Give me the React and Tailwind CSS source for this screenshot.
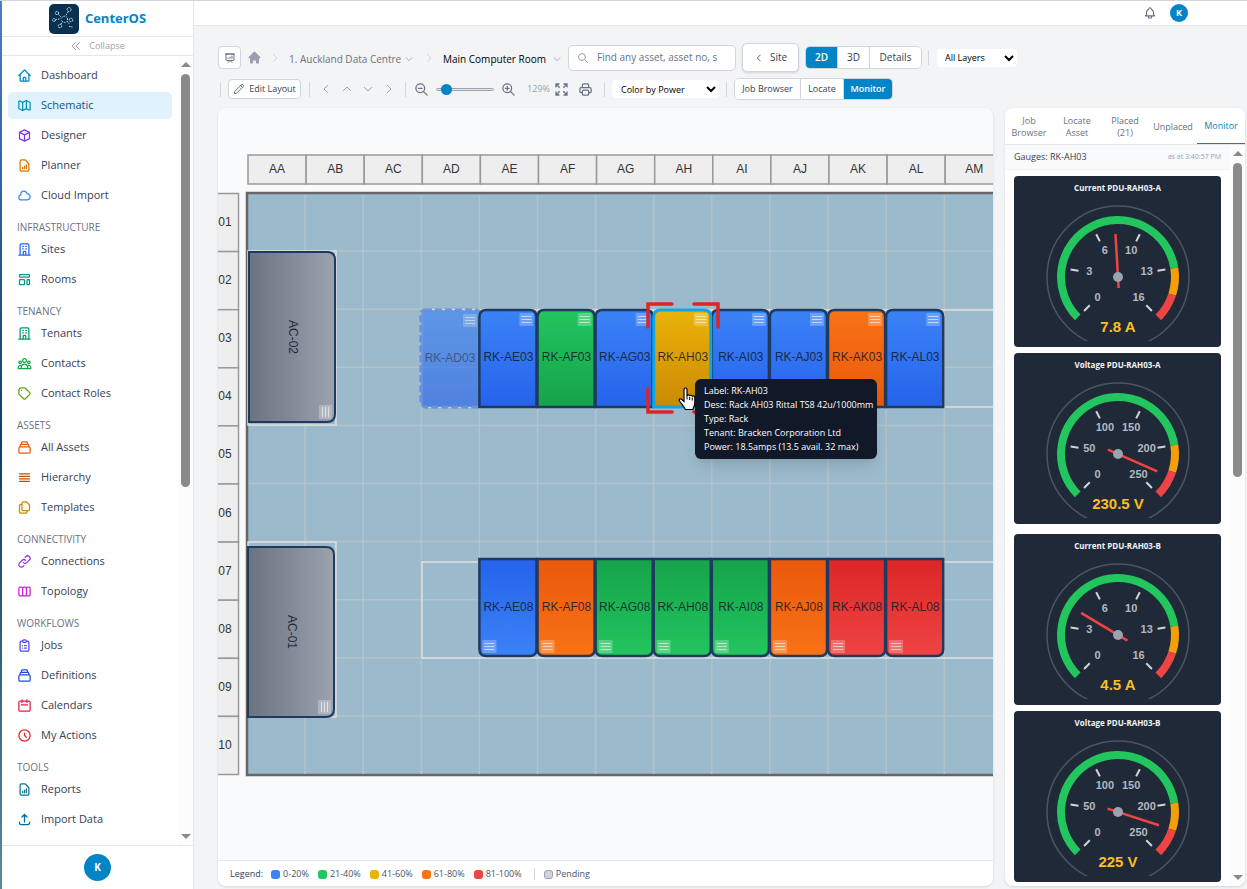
import { useState } from "react"
import {
  HiHome,
  HiOutlineBell,
  HiOutlineCalendar,
  HiOutlineChevronDoubleLeft,
  HiOutlineChevronDown,
  HiOutlineChevronLeft,
  HiOutlineChevronRight,
  HiOutlineChevronUp,
  HiOutlineClipboardList,
  HiOutlineClock,
  HiOutlineCloud,
  HiOutlineCollection,
  HiOutlineCube,
  HiOutlineDocumentDuplicate,
  HiOutlineDocumentReport,
  HiOutlineHome,
  HiOutlineLink,
  HiOutlineMap,
  HiOutlineOfficeBuilding,
  HiOutlinePencil,
  HiOutlinePresentationChartBar,
  HiOutlinePrinter,
  HiOutlineSearch,
  HiOutlineTag,
  HiOutlineTemplate,
  HiOutlineUpload,
  HiOutlineUserGroup,
  HiOutlineViewBoards,
  HiOutlineViewList,
  HiOutlineZoomIn,
  HiOutlineZoomOut,
} from "react-icons/hi"

const navSections = [
  {
    items: [
      { label: "Dashboard", icon: HiOutlineHome, color: "text-[#0284c7]" },
      { label: "Schematic", icon: HiOutlineMap, color: "text-[#0891b2]" },
      { label: "Designer", icon: HiOutlineCube, color: "text-[#7c3aed]" },
      { label: "Planner", icon: HiOutlineDocumentReport, color: "text-[#d97706]" },
      { label: "Cloud Import", icon: HiOutlineCloud, color: "text-[#3b82f6]" },
    ],
  },
  {
    title: "Infrastructure",
    items: [
      { label: "Sites", icon: HiOutlineOfficeBuilding, color: "text-[#2563eb]" },
      { label: "Rooms", icon: HiOutlineTemplate, color: "text-[#0d9488]" },
    ],
  },
  {
    title: "Tenancy",
    items: [
      { label: "Tenants", icon: HiOutlineOfficeBuilding, color: "text-[#059669]" },
      { label: "Contacts", icon: HiOutlineUserGroup, color: "text-[#16a34a]" },
      { label: "Contact Roles", icon: HiOutlineTag, color: "text-[#65a30d]" },
    ],
  },
  {
    title: "Assets",
    items: [
      { label: "All Assets", icon: HiOutlineCollection, color: "text-[#ea580c]" },
      { label: "Hierarchy", icon: HiOutlineViewList, color: "text-[#b45309]" },
      { label: "Templates", icon: HiOutlineDocumentDuplicate, color: "text-[#ca8a04]" },
    ],
  },
  {
    title: "Connectivity",
    items: [
      { label: "Connections", icon: HiOutlineLink, color: "text-[#9333ea]" },
      { label: "Topology", icon: HiOutlineViewBoards, color: "text-[#c026d3]" },
    ],
  },
  {
    title: "Workflows",
    items: [
      { label: "Jobs", icon: HiOutlineClipboardList, color: "text-[#4f46e5]" },
      { label: "Definitions", icon: HiOutlineCollection, color: "text-[#1d4ed8]" },
      { label: "Calendars", icon: HiOutlineCalendar, color: "text-[#e11d48]" },
      { label: "My Actions", icon: HiOutlineClock, color: "text-[#dc2626]" },
    ],
  },
  {
    title: "Tools",
    items: [
      { label: "Reports", icon: HiOutlineDocumentReport, color: "text-[#0e7490]" },
      { label: "Import Data", icon: HiOutlineUpload, color: "text-[#0369a1]" },
    ],
  },
]

const Scrollbar = ({ thumb }) => (
  <div className="flex w-[15px] shrink-0 flex-col items-center bg-[#fcfcfc] py-[6px]">
    <div className="border-x-[5px] border-b-[5px] border-x-transparent border-b-[#8a8a8a]" />
    <div className={`mt-[7px] w-[9px] rounded-full bg-[#8a8a8a] ${thumb}`} />
    <div className="mt-auto border-x-[5px] border-t-[5px] border-x-transparent border-t-[#8a8a8a]" />
  </div>
)

const Logo = () => (
  <svg width="30" height="30" viewBox="0 0 30 30" fill="none" stroke="#a9d8ee" strokeWidth="1">
    <rect width="30" height="30" rx="5" fill="#0b2f4e" stroke="none" />
    <path d="M12 14.500q3-4 6-1M18.500 14v4M12.500 16.500q1.500 2.500 4 2" strokeDasharray="2 1" />
    <circle cx="20" cy="5.500" r="2" strokeDasharray="2 .6" />
    <circle cx="8" cy="9" r="1.700" strokeDasharray="2 .6" />
    <circle cx="5" cy="16" r="1.500" strokeDasharray="2 .6" />
    <circle cx="11" cy="22" r="1.800" strokeDasharray="2 .6" />
    <circle cx="22" cy="16" r="1.800" strokeDasharray="2 .6" />
    <path d="M19 8l-2.500 4M9.500 10.500l2.500 2.500M6.500 15.500l4-.5M12 20l1.500-2.500M18 17.500l2.500 2.500M20 22.500h3v2" strokeDasharray="1.500 1" />
  </svg>
)

const Sidebar = () => (
  <aside className="flex w-48 shrink-0 flex-col border-r border-gray-200 bg-white">
    <div className="flex h-9 shrink-0 items-center justify-center gap-[6px] border-b border-gray-200">
      <Logo />
      <span className="text-[13px] font-bold text-[#0284c7]">CenterOS</span>
    </div>
    <button className="flex h-[19px] shrink-0 items-center justify-center gap-[7px] border-b border-gray-200 text-[9px] text-gray-400">
      <HiOutlineChevronDoubleLeft className="size-3" />
      Collapse
    </button>
    <div className="flex min-h-0 flex-1">
      <nav className="flex-1 overflow-hidden pt-[6px] pr-[6px] pl-[6px]">
        {navSections.map((section, i) => (
          <div key={i}>
            {section.title && (
              <h2 className="pt-[7px] pb-px pl-[9px] text-[10px] leading-4 text-gray-500 uppercase">
                {section.title}
              </h2>
            )}
            {section.items.map(({ label, icon: Icon, color }) => (
              <a
                key={label}
                href="#"
                className={`mb-[3px] flex h-[27px] items-center gap-[9px] rounded-[5px] pl-[9px] text-[11px] ${
                  label === "Schematic" ? "bg-[#e0f2fe] text-[#075985]" : "text-gray-700"
                }`}
              >
                <Icon className={`size-[15px] ${color}`} />
                {label}
              </a>
            ))}
          </div>
        ))}
      </nav>
      <Scrollbar thumb="h-[413px]" />
    </div>
    <div className="flex h-11 shrink-0 items-center justify-center border-t border-gray-200">
      <button className="size-[27px] rounded-full bg-[#0284c7] text-[10px] font-bold text-white">K</button>
    </div>
  </aside>
)

const Divider = () => <div className="h-[15px] w-px shrink-0 bg-gray-300" />

const ExpandIcon = () => (
  <svg className="size-[13px]" viewBox="0 0 13 13" fill="none" stroke="currentColor" strokeWidth="1.300">
    <path d="M1 4.500V1h3.500M1 1l3.700 3.700M8.500 1H12v3.500M12 1L8.300 4.700M1 8.500V12h3.500M1 12l3.700-3.700M12 8.500V12H8.500M12 12L8.300 8.300" />
  </svg>
)

const Toolbar = () => {
  const [zoom, setZoom] = useState(129)
  const [view, setView] = useState("2D")
  const segment = (active) => (active ? "bg-[#0284c7] font-semibold text-white" : "bg-white text-gray-700")

  return (
    <div className="flex flex-col text-gray-700">
      <div className="flex h-[29px] items-center">
        <button aria-label="Dashboards" className="flex size-[23px] items-center justify-center rounded-[4px] border border-gray-300 bg-white text-gray-500">
          <HiOutlinePresentationChartBar className="size-3" />
        </button>
        <a href="#" aria-label="Home" className="ml-[6px] text-gray-400">
          <HiHome className="size-[15px]" />
        </a>
        <HiOutlineChevronRight className="ml-[7px] size-3 text-gray-300" />
        <a href="#" className="ml-2 flex w-[125px] items-center justify-between pt-[3px] text-[10px] whitespace-nowrap text-gray-500">
          1. Auckland Data Centre
          <HiOutlineChevronDown className="size-[10px] shrink-0 text-gray-400" />
        </a>
        <HiOutlineChevronRight className="ml-[9px] size-3 text-gray-300" />
        <a href="#" className="ml-2 flex w-[119px] items-center justify-between pt-[3px] text-[10px] font-medium whitespace-nowrap text-black">
          Main Computer Room
          <HiOutlineChevronDown className="size-[10px] shrink-0 text-gray-400" />
        </a>
        <label className="ml-[6px] flex h-[26px] w-42 items-center gap-2 rounded-[5px] border border-gray-300 bg-white px-2">
          <HiOutlineSearch className="size-3 shrink-0 text-gray-400" />
          <input
            type="text"
            aria-label="Find asset"
            placeholder="Find any asset, asset no, s"
            className="w-full min-w-0 text-[10px] outline-none placeholder:text-gray-500"
          />
        </label>
        <button className="ml-[6px] flex h-[29px] w-[57px] items-center justify-center gap-[6px] rounded-[5px] border border-gray-300 bg-white text-[10px] shadow-sm">
          <HiOutlineChevronLeft className="size-[10px]" />
          Site
        </button>
        <div className="ml-[6px] flex h-[23px] divide-x divide-gray-300 overflow-hidden rounded-[5px] border border-gray-300 text-[10px]">
          {["2D", "3D", "Details"].map((name) => (
            <button
              key={name}
              onClick={() => setView(name)}
              className={`${name === "Details" ? "w-[51px]" : "w-8"} ${segment(view === name)}`}
            >
              {name}
            </button>
          ))}
        </div>
        <div className="mx-2 ml-[6px]">
          <Divider />
        </div>
        <select aria-label="Layers" className="h-[18px] w-20 rounded-[4px] bg-white pl-1 text-[9px] text-black">
          <option>All Layers</option>
        </select>
      </div>

      <div className="mt-[6px] flex h-[22px] items-center">
        <div className="ml-[2px]">
          <Divider />
        </div>
        <button className="ml-[7px] flex h-5 w-[73px] items-center justify-center gap-1 rounded-[4px] border border-gray-300 bg-white text-[9px] whitespace-nowrap">
          <HiOutlinePencil className="size-3 text-gray-500" />
          Edit Layout
        </button>
        <div className="mr-[10px] ml-2">
          <Divider />
        </div>
        <div className="flex gap-[9px] text-gray-400">
          <button aria-label="Pan left"><HiOutlineChevronLeft className="size-3" /></button>
          <button aria-label="Pan up"><HiOutlineChevronUp className="size-3" /></button>
          <button aria-label="Pan down"><HiOutlineChevronDown className="size-3" /></button>
          <button aria-label="Pan right"><HiOutlineChevronRight className="size-3" /></button>
        </div>
        <div className="mr-2 ml-[10px]">
          <Divider />
        </div>
        <button aria-label="Zoom out" className="text-gray-500"><HiOutlineZoomOut className="size-[15px]" /></button>
        <input
          type="range"
          aria-label="Zoom"
          min="100"
          max="400"
          value={zoom}
          onChange={(e) => setZoom(Number(e.target.value))}
          className="mx-[7px] h-[3px] w-[58px] appearance-none rounded-full border border-gray-400 bg-gray-200 [&::-webkit-slider-thumb]:size-[11px] [&::-webkit-slider-thumb]:appearance-none [&::-webkit-slider-thumb]:rounded-full [&::-webkit-slider-thumb]:bg-[#0284c7]"
        />
        <button aria-label="Zoom in" className="text-gray-500"><HiOutlineZoomIn className="size-[15px]" /></button>
        <span className="ml-[11px] w-[22px] text-[9px] text-gray-400">{zoom}%</span>
        <button aria-label="Fit to screen" className="ml-[6px] text-gray-500"><ExpandIcon /></button>
        <button aria-label="Print" className="ml-[10px] text-gray-500"><HiOutlinePrinter className="size-[15px]" /></button>
        <div className="mr-[7px] ml-[11px]">
          <Divider />
        </div>
        <select aria-label="Color by" className="h-[18px] w-[107px] rounded-[4px] bg-white pl-[5px] text-[9px] text-black">
          <option>Color by Power</option>
        </select>
        <div className="mx-[7px]">
          <Divider />
        </div>
        <div className="flex h-[22px] divide-x divide-gray-300 overflow-hidden rounded-[5px] border border-gray-300 text-[9px]">
          <button className="w-[66px] bg-white">Job Browser</button>
          <button className="w-[43px] bg-white">Locate</button>
          <button className="w-[48px] bg-[#0284c7] font-semibold text-white">Monitor</button>
        </div>
      </div>
    </div>
  )
}

const CELL = 58.1
const COLUMNS = ["AA", "AB", "AC", "AD", "AE", "AF", "AG", "AH", "AI", "AJ", "AK", "AL", "AM"]
const ROWS = ["01", "02", "03", "04", "05", "06", "07", "08", "09", "10"]

const levels = {
  blue: ["#3b82f6", "#2563eb"],
  green: ["#22c55e", "#16a34a"],
  yellow: ["#eab308", "#ca8a04"],
  orange: ["#f97316", "#ea580c"],
  red: ["#ef4444", "#dc2626"],
}

const frontRow = ["blue", "green", "blue", "yellow", "blue", "blue", "orange", "blue"]
const backRow = ["blue", "orange", "green", "green", "green", "orange", "red", "red"]

const Badge = ({ x, y, vertical }) => (
  <g transform={vertical ? `translate(${x + 14} ${y}) rotate(90)` : `translate(${x} ${y})`}>
    <rect width="14" height="13" rx="1" fill="#fff" opacity="0.250" />
    <path d="M2 3.500h10M2 6.500h10M2 9.500h10" stroke="#fff" strokeWidth="1" opacity="0.600" />
  </g>
)

// racks facing down have their rounded front at the bottom
const Rack = ({ col, y, level, down, selected }) => {
  const x = col * CELL - 1
  const label = `RK-${COLUMNS[col]}${down ? "08" : "03"}`
  const shape = down
    ? `M${x + 1} ${y}h${CELL - 1}v90q0 7-7 7h${15 - CELL}q-7 0-7-7z`
    : `M${x + 1} ${y + 97}v-90q0-7 7-7h${CELL - 15}q7 0 7 7v90z`
  return (
    <g>
      <path d={shape} fill={`url(#${level}-${down ? "down" : "up"})`} stroke={selected ? "#0ea5e9" : "#1e3a5f"} strokeWidth={selected ? 3 : 2.5} />
      <Badge x={down ? x + 4 : x + CELL - 17} y={down ? y + 81 : y + 3} />
      <text x={x + 1 + CELL / 2} y={y + (down ? 52 : 51)} textAnchor="middle" fill="#111827" fillOpacity="0.850">{label}</text>
    </g>
  )
}

const FloorPlan = () => (
  <svg className="block h-full w-full font-['Liberation_Sans',Arial,sans-serif] text-[12px]">
    <defs>
      {Object.entries(levels).map(([name, [light, dark]]) => (
        <g key={name}>
          <linearGradient id={`${name}-up`} x1="0" y1="0" x2="0" y2="1">
            <stop offset="0" stopColor={light} />
            <stop offset="1" stopColor={dark} />
          </linearGradient>
          <linearGradient id={`${name}-down`} x1="0" y1="0" x2="0" y2="1">
            <stop offset="0" stopColor={dark} />
            <stop offset="1" stopColor={light} />
          </linearGradient>
        </g>
      ))}
      <linearGradient id="cooling">
        <stop offset="0" stopColor="#6b7280" />
        <stop offset="1" stopColor="#9ca3af" />
      </linearGradient>
    </defs>

    <g transform="translate(29 85)">
      {/* rulers */}
      <g fill="#eee" stroke="#999" strokeWidth="1.500">
        {COLUMNS.map((name, i) => (
          <rect key={name} x={1 + i * CELL} y="-38" width={CELL} height="29" />
        ))}
        {ROWS.map((name, i) => (
          <rect key={name} x="-60" y={0.5 + i * CELL} width="51.500" height={CELL} />
        ))}
      </g>
      <g fill="#333" textAnchor="middle">
        {COLUMNS.map((name, i) => (
          <text key={name} x={1 + (i + 0.5) * CELL} y="-20">{name}</text>
        ))}
        {ROWS.map((name, i) => (
          <text key={name} x="-22" y={(i + 0.5) * CELL + 4}>{name}</text>
        ))}
      </g>

      {/* room */}
      <rect x="0" y="0" width="1200" height={CELL * 10 + 1} fill="#9bbacb" stroke="#666" strokeWidth="2.500" />
      <g stroke="#b4c2c9" strokeWidth="1.500">
        {COLUMNS.map((name, i) => (
          <path key={name} d={`M${(i + 1) * CELL} 2V${CELL * 10}`} />
        ))}
        {ROWS.slice(1).map((name, i) => (
          <path key={name} d={`M2 ${(i + 1) * CELL}H1200`} />
        ))}
      </g>
      <g fill="none" stroke="#dde0e0" strokeWidth="1.500">
        <rect x="1" y="58" width="88" height="174" />
        <rect x="1" y="349" width="88" height="175" />
        <rect x="175" y="117" width="1100" height="97" />
        <rect x="175" y="369" width="1100" height="96" />
      </g>

      {/* cooling units */}
      {[["AC-02", 1, 59], ["AC-01", 0, 354]].map(([name, x, y]) => (
        <g key={name}>
          <path d={`M${x + 1} ${y}h78q8 0 8 8v154q0 8-8 8h-78z`} fill="url(#cooling)" stroke="#1e3a5f" strokeWidth="2" />
          <text transform={`translate(${x + 41} ${y + 85}) rotate(90)`} textAnchor="middle" fill="#1f2937">{name}</text>
          <Badge x={x + 70} y={y + 153} vertical />
        </g>
      ))}

      <g opacity="0.750">
        <rect x="174" y="117" width="59" height="97" rx="4" fill="url(#blue-up)" fillOpacity="0.850" stroke="#4f7be8" strokeWidth="3" strokeDasharray="7 3" />
        <Badge x={216} y={121} />
        <text x="203" y="169" textAnchor="middle" fill="#1f3a6b">RK-AD03</text>
      </g>
      {frontRow.map((level, i) => (
        i !== 3 && <Rack key={i} col={i + 4} y={117} level={level} />
      ))}
      <Rack col={7} y={117} level="yellow" selected />
      {backRow.map((level, i) => (
        <Rack key={i} col={i + 4} y={366} level={level} down />
      ))}

      <path
        d="M401 134V111H425M447 111H471V134M401 196V219H425M447 219H471V196"
        fill="none"
        stroke="#dc2626"
        strokeWidth="3.500"
        strokeLinecap="round"
      />
    </g>
  </svg>
)

const HandCursor = () => (
  <svg className="pointer-events-none absolute top-[279px] left-[460px]" width="18" height="24" viewBox="0 0 18 24">
    <path
      d="M6 2.500C6 .500 9 .500 9 2.500V9c0-1.500 2.700-1.500 2.700.3 0-1.500 2.600-1.400 2.600.5 0-1.300 2.500-1.200 2.500.7V16c0 3-1.500 4-1.800 6.500H7.300C6.500 19.500 3.500 17 1.500 14c-1-1.700.8-3 2.300-1.500L6 14.500z"
      fill="#fff"
      stroke="#000"
      strokeWidth="1.200"
    />
    <path d="M9 9v3.500M11.700 10v3M14.300 10.500v3" stroke="#000" strokeWidth="1" />
  </svg>
)

const legend = [
  { label: "0-20%", color: "bg-[#3b82f6]" },
  { label: "21-40%", color: "bg-[#22c55e]" },
  { label: "41-60%", color: "bg-[#eab308]" },
  { label: "61-80%", color: "bg-[#f97316]" },
  { label: "81-100%", color: "bg-[#ef4444]" },
]

const Schematic = () => (
  <section className="flex min-w-0 flex-1 flex-col overflow-hidden rounded-lg bg-gray-50 shadow-sm">
    <div className="relative min-h-0 flex-1 overflow-hidden">
      <FloorPlan />
      <HandCursor />
      <div role="tooltip" className="absolute top-[271px] left-[477px] rounded-md bg-[#111827] py-[5px] pr-1 pl-[9px] text-[9px] leading-[14px] whitespace-nowrap text-white shadow-lg">
        <p>Label: RK-AH03</p>
        <p>Desc: Rack AH03 Rittal TS8 42u/1000mm</p>
        <p>Type: Rack</p>
        <p>Tenant: Bracken Corporation Ltd</p>
        <p>Power: 18.5amps (13.5 avail. 32 max)</p>
      </div>
    </div>
    <footer className="flex h-[26px] shrink-0 items-center border-t border-gray-200 bg-white pt-px pl-3 text-[9px] text-gray-600">
      <span className="mr-2 text-gray-700">Legend:</span>
      <ul className="flex gap-[9px]">
        {legend.map(({ label, color }) => (
          <li key={label} className="flex items-center gap-[3px]">
            <span className={`size-[9px] rounded-[3px] ${color}`} />
            {label}
          </li>
        ))}
      </ul>
      <div className="mr-[9px] ml-3 h-3 w-px bg-gray-300" />
      <span className="mr-[3px] size-[9px] rounded-[3px] border border-gray-400 bg-gray-300" />
      Pending
    </footer>
  </section>
)

const polar = (deg, r) => {
  const rad = (deg * Math.PI) / 180
  return [72 + r * Math.sin(rad), 80 - r * Math.cos(rad)]
}

const arc = (from, to, r) => {
  const [x1, y1] = polar(from, r)
  const [x2, y2] = polar(to, r)
  return `M${x1} ${y1}A${r} ${r} 0 ${to - from > 180 ? 1 : 0} 1 ${x2} ${y2}`
}

const Gauge = ({ title, value, max, unit }) => {
  const angle = -135 + (value / max) * 270
  const [tipX, tipY] = polar(angle, 43)
  const [tailX, tailY] = polar(angle, -11)

  return (
    <figure className="rounded-[4px] bg-[#1f2937] pt-1.5 pb-1.5">
      <figcaption className="text-center text-[8px] leading-3 font-bold text-gray-100">{title}</figcaption>
      <svg className="mx-auto mt-[3px] block font-['Liberation_Sans',Arial,sans-serif]" width="144" height="144" viewBox="0 0 144 144" fill="none">
        <circle cx="72" cy="80" r="71" stroke="#4b5563" strokeWidth="1.500" />
        <path d={arc(-135, 81, 57)} stroke="#22c55e" strokeWidth="8" />
        <path d={arc(81, 108, 57)} stroke="#f59e0b" strokeWidth="8" />
        <path d={arc(108, 135, 57)} stroke="#ef4444" strokeWidth="8" />
        {[0, 1, 2, 3, 4, 5].map((i) => {
          const deg = -135 + i * 54
          const [x1, y1] = polar(deg, 40)
          const [x2, y2] = polar(deg, 48)
          const [tx, ty] = polar(deg, 29)
          return (
            <g key={i}>
              <path d={`M${x1} ${y1}L${x2} ${y2}`} stroke="#d1d5db" strokeWidth="2" />
              <text x={tx} y={ty + 3} textAnchor="middle" fill="#b4b9c1" fontSize="11" fontWeight="700">
                {Math.round((max * i) / 5)}
              </text>
            </g>
          )
        })}
        <path d={`M${tailX} ${tailY}L${tipX} ${tipY}`} stroke="#ef4444" strokeWidth="2.500" />
        <circle cx="72" cy="80" r="5" fill="#9ca3af" />
        <text x="72" y="135" textAnchor="middle" fill="#fbbf24" fontSize="15" fontWeight="700">
          {value} {unit}
        </text>
      </svg>
    </figure>
  )
}

const MonitorPanel = () => (
  <aside className="flex w-60 shrink-0 flex-col overflow-hidden rounded-lg bg-white shadow-sm">
    <div className="flex h-[37px] shrink-0 border-b border-gray-200 pt-px text-[9px] leading-3 text-gray-500">
      {["Job Browser", "Locate Asset", "Placed (21)", "Unplaced", "Monitor"].map((tab) => (
        <button
          key={tab}
          className={`w-12 px-px ${tab === "Monitor" ? "border-b border-[#0284c7] text-[#0284c7]" : ""}`}
        >
          {tab.split(" ").map((word) => (
            <span key={word} className="block">{word}</span>
          ))}
        </button>
      ))}
    </div>
    <div className="flex min-h-0 flex-1">
      <div className="flex-1 overflow-hidden">
        <div className="flex h-[25px] items-center justify-between border-b border-gray-100 bg-gray-50 px-[9px]">
          <h2 className="text-[9px] text-gray-700">Gauges: RK-AH03</h2>
          <span className="text-[7px] text-gray-400">as at 3:40:57 PM</span>
        </div>
        <div className="flex flex-col gap-[10px] px-[9px] pt-[6px]">
          <div className="flex flex-col gap-[6px]">
            <Gauge title="Current PDU-RAH03-A" value={7.8} max={16} unit="A" />
            <Gauge title="Voltage PDU-RAH03-A" value={230.5} max={250} unit="V" />
          </div>
          <div className="flex flex-col gap-[6px]">
            <Gauge title="Current PDU-RAH03-B" value={4.5} max={16} unit="A" />
            <Gauge title="Voltage PDU-RAH03-B" value={225} max={250} unit="V" />
          </div>
        </div>
      </div>
      <Scrollbar thumb="h-[314px]" />
    </div>
  </aside>
)

const App = () => {
  return (
    <div className="flex h-screen overflow-hidden border-t border-gray-300 bg-gray-100 font-['Open_Sans','Noto_Sans',sans-serif]">
      <div className="w-[2px] shrink-0 bg-linear-to-b from-[#4a7fc0] via-[#0f3d66] to-[#5a8a9a]" />
      <Sidebar />
      <div className="flex min-w-0 flex-1 flex-col">
        <header className="flex h-[25px] shrink-0 items-center justify-end gap-[13px] border-b border-gray-200 bg-white pr-[59px]">
          <button aria-label="Notifications" className="text-gray-500"><HiOutlineBell className="size-[14px]" /></button>
          <button className="size-[18px] rounded-full bg-[#0284c7] text-[9px] font-bold text-white">K</button>
        </header>
        <main className="flex min-h-0 flex-1 flex-col pt-[17px] pr-[2px] pb-[3px] pl-6">
          <Toolbar />
          <div className="mt-2 flex min-h-0 flex-1 gap-3">
            <Schematic />
            <MonitorPanel />
          </div>
        </main>
      </div>
    </div>
  )
}

export default App
